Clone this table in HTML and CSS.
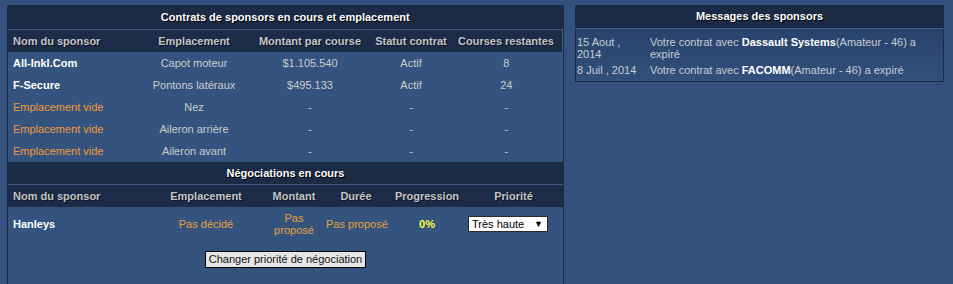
FILE: index.html
```html
<!DOCTYPE html>
<html lang="fr">
<head>
<meta charset="utf-8">
<title>Sponsors</title>
<link rel="stylesheet" href="styles.css">
</head>
<body>
<div class="page">
  <section class="panel main">
    <table class="grid contracts">
      <colgroup>
        <col class="c1"><col class="c2"><col class="c3"><col class="c4"><col class="c5">
      </colgroup>
      <thead>
        <tr class="title"><th colspan="5">Contrats de sponsors en cours et emplacement</th></tr>
        <tr class="heads">
          <th class="left">Nom du sponsor</th>
          <th>Emplacement</th>
          <th>Montant par course</th>
          <th>Statut contrat</th>
          <th>Courses restantes</th>
        </tr>
      </thead>
      <tbody>
        <tr><td class="left name">All-Inkl.Com</td><td>Capot moteur</td><td>$1.105.540</td><td>Actif</td><td>8</td></tr>
        <tr><td class="left name">F-Secure</td><td>Pontons latéraux</td><td>$495.133</td><td>Actif</td><td>24</td></tr>
        <tr><td class="left empty">Emplacement vide</td><td>Nez</td><td>-</td><td>-</td><td>-</td></tr>
        <tr><td class="left empty">Emplacement vide</td><td>Aileron arrière</td><td>-</td><td>-</td><td>-</td></tr>
        <tr><td class="left empty">Emplacement vide</td><td>Aileron avant</td><td>-</td><td>-</td><td>-</td></tr>
      </tbody>
    </table>

    <table class="grid nego">
      <colgroup>
        <col class="n1"><col class="n2"><col class="n3"><col class="n4"><col class="n5"><col class="n6">
      </colgroup>
      <thead>
        <tr class="title"><th colspan="6">Négociations en cours</th></tr>
        <tr class="heads">
          <th class="left">Nom du sponsor</th>
          <th>Emplacement</th>
          <th>Montant</th>
          <th>Durée</th>
          <th>Progression</th>
          <th class="prio">Priorité</th>
        </tr>
      </thead>
      <tbody>
        <tr class="tall">
          <td class="left name">Hanleys</td>
          <td class="pending">Pas décidé</td>
          <td class="pending">Pas proposé</td>
          <td class="pending nowrap">Pas proposé</td>
          <td class="progress">0%</td>
          <td class="selcell">
            <span class="select">
              <select><option>Très haute</option><option>Haute</option><option>Normale</option><option>Basse</option></select>
              <span class="arrow">▼</span>
            </span>
          </td>
        </tr>
      </tbody>
    </table>

    <div class="actions">
      <button type="button">Changer priorité de négociation</button>
    </div>
  </section>

  <section class="panel side">
    <div class="side-title">Messages des sponsors</div>
    <div class="messages">
      <div class="msg">
        <div class="date">15 Aout , 2014</div>
        <div class="text">Votre contrat avec <b>Dassault Systems</b>(Amateur - 46) a expiré</div>
      </div>
      <div class="msg">
        <div class="date">8 Juil , 2014</div>
        <div class="text">Votre contrat avec <b>FACOMM</b>(Amateur - 46) a expiré</div>
      </div>
    </div>
  </section>
</div>
</body>
</html>
```

FILE: styles.css
```css
html, body {
  margin: 0;
  padding: 0;
  background: #33517c;
  height: 100%;
}

body {
  font-family: "Liberation Sans", Arial, sans-serif;
  font-size: 11px;
  color: #cccccc;
  overflow: hidden;
}

.page {
  display: flex;
  align-items: flex-start;
  gap: 11px;
  padding: 5px 0 0 7px;
}

.panel.main {
  width: 555px;
  border-left: 1px solid #1b2a45;
  border-right: 1px solid #1b2a45;
  background: #34537e;
  min-height: 300px;
}

.grid {
  width: 100%;
  border-collapse: collapse;
  table-layout: fixed;
}

.grid th,
.grid td {
  padding: 0 2px;
  text-align: center;
  vertical-align: middle;
  line-height: 12px;
  white-space: nowrap;
}

.grid .left {
  text-align: left;
  padding-left: 5px;
}

.contracts .c1 { width: 132px; }
.contracts .c2 { width: 108px; }
.contracts .c3 { width: 124px; }
.contracts .c4 { width: 78px; }
.contracts .c5 { width: auto; }

.nego .n1 { width: 142px; }
.nego .n2 { width: 112px; }
.nego .n3 { width: 64px; }
.nego .n4 { width: 60px; }
.nego .n5 { width: 82px; }
.nego .n6 { width: auto; }

.title th {
  height: 24px;
  background: #1b2a45;
  color: #ffffff;
  font-weight: bold;
  text-shadow: 1px 1px 0 #000000;
}

.heads th {
  height: 22px;
  background: #1c2b47;
  color: #c4c4c4;
  font-weight: bold;
  border-top: 1px solid #3d5a86;
  text-shadow: 1px 1px 0 #0c1526;
}

.contracts .heads th:last-child {
  border-right: 1px solid #3d5a86;
}

.grid tbody td {
  height: 22px;
}

.name {
  color: #ffffff;
  font-weight: bold;
}

.empty {
  color: #f39a35;
}

.nego .title th {
  height: 22px;
}

.nego tbody tr.tall td {
  height: 34px;
}

.pending {
  color: #e9a03f;
}

.nego td.pending {
  white-space: normal;
}

.nego td.pending.nowrap {
  white-space: nowrap;
  padding: 0;
}

.progress {
  color: #ffff33;
  font-weight: bold;
}

.nego .prio {
  padding-right: 6px;
}

.selcell {
  text-align: left !important;
}

.select {
  position: relative;
  display: inline-block;
  width: 80px;
  height: 16px;
  margin-left: -2px;
  vertical-align: middle;
}

.select select {
  appearance: none;
  -webkit-appearance: none;
  width: 80px;
  height: 16px;
  margin: 0;
  padding: 0 0 0 3px;
  border: 1px solid #2a2a2a;
  background: #ffffff;
  color: #000000;
  font-family: "Liberation Sans", Arial, sans-serif;
  font-size: 11px;
  line-height: 14px;
  box-sizing: border-box;
}

.select .arrow {
  position: absolute;
  right: 5px;
  top: 2px;
  font-size: 9px;
  line-height: 12px;
  color: #000000;
  pointer-events: none;
}

.actions {
  display: flex;
  justify-content: center;
  padding-top: 10px;
}

.actions button {
  margin: 0;
  padding: 0 3px;
  height: 17px;
  background: #e6e6e6;
  border: 1px solid #000000;
  border-radius: 0;
  color: #111111;
  font-family: "Liberation Sans", Arial, sans-serif;
  font-size: 11px;
  line-height: 15px;
}

.panel.side {
  width: 369px;
}

.side-title {
  height: 23px;
  line-height: 23px;
  background: #1b2a45;
  color: #ffffff;
  font-weight: bold;
  text-align: center;
  text-shadow: 1px 1px 0 #000000;
  border-bottom: 1px solid #3d5a86;
}

.messages {
  border: 1px solid #1b2a45;
  border-top: none;
  background: linear-gradient(#28436c, #32507b);
  padding: 7px 1px 5px 1px;
  display: flex;
  flex-direction: column;
  gap: 4px;
}

.msg {
  display: flex;
  line-height: 12px;
}

.msg .date {
  width: 73px;
  flex: none;
  padding-right: 8px;
  box-sizing: border-box;
  color: #c8ccd4;
}

.msg .text {
  flex: 1;
  color: #c8ccd4;
  padding-right: 4px;
}

.msg .text b {
  color: #ffffff;
}
```
